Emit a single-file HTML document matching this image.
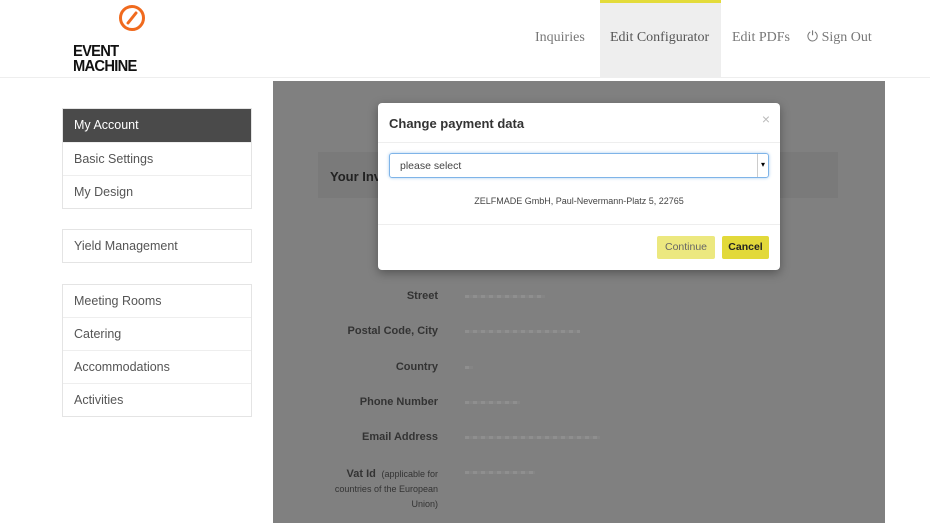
<!DOCTYPE html>
<html><head><style>
body{margin:0;width:930px;height:523px;background:#fff;font-family:"Liberation Sans",sans-serif;position:relative;overflow:hidden}
.a{position:absolute}
.nav{font-family:"Liberation Serif",serif;font-size:14px;color:#777;top:30px}
.side{left:62px;width:188px;border:1px solid #e4e4e4;background:#fff}
.side div{height:32px;line-height:32px;padding-left:11px;font-size:12.5px;color:#555;border-top:1px solid #eee}
.side div:first-child{border-top:none}
.lbl{font-size:11px;font-weight:bold;color:#333;text-align:right;width:200px;left:238px}
.val{left:465px;height:3px;background:repeating-linear-gradient(90deg,#999 0 4px,#888 4px 8px);opacity:.6}
</style></head><body>
<div class="a" style="left:0;top:77px;width:930px;height:1px;background:#eee"></div>
<svg class="a" style="left:116px;top:3px" width="32" height="30" viewBox="0 0 32 30"><circle cx="16" cy="15" r="11.5" fill="none" stroke="#f06a1e" stroke-width="3"/><line x1="12" y1="20" x2="20" y2="10" stroke="#f06a1e" stroke-width="3" stroke-linecap="round"/></svg>
<div class="a" style="left:73px;top:44px;font-weight:bold;font-size:16px;line-height:15px;color:#111;letter-spacing:-.8px;transform:scaleX(.92);transform-origin:left">EVENT<br>MACHINE</div>
<div class="a" style="left:600px;top:0;width:121px;height:78px;background:#eee"></div>
<div class="a" style="left:600px;top:0;width:121px;height:3px;background:#e3db3a"></div>
<div class="a nav" style="left:535px">Inquiries</div>
<div class="a nav" style="left:610px;color:#555">Edit Configurator</div>
<div class="a nav" style="left:732px">Edit PDFs</div>
<div class="a nav" style="left:807px">⏻ Sign Out</div>

<div class="a side" style="top:108px"><div style="background:#4a4a4a;color:#fff;height:33px;line-height:33px">My Account</div><div>Basic Settings</div><div>My Design</div></div>
<div class="a side" style="top:229px"><div>Yield Management</div></div>
<div class="a side" style="top:284px"><div>Meeting Rooms</div><div>Catering</div><div>Accommodations</div><div>Activities</div></div>

<div class="a" style="left:273px;top:81px;width:612px;height:442px;background:#808080"></div>
<div class="a" style="left:318px;top:152px;width:520px;height:46px;background:#7a7a7a"></div>
<div class="a" style="left:330px;top:169px;font-size:13px;font-weight:bold;color:#222">Your Inv</div>
<div class="a lbl" style="top:290px">Street</div>
<div class="a lbl" style="top:325px">Postal Code, City</div>
<div class="a lbl" style="top:361px">Country</div>
<div class="a lbl" style="top:396px">Phone Number</div>
<div class="a lbl" style="top:431px">Email Address</div>
<div class="a lbl" style="top:467px;line-height:15px">Vat Id <span style="font-weight:normal;font-size:9px">&nbsp;(applicable for<br>countries of the European<br>Union)</span></div>
<div class="a val" style="top:295px;width:80px"></div>
<div class="a val" style="top:330px;width:115px"></div>
<div class="a val" style="top:366px;width:8px"></div>
<div class="a val" style="top:401px;width:55px"></div>
<div class="a val" style="top:436px;width:135px"></div>
<div class="a val" style="top:471px;width:70px"></div>

<div class="a" style="left:378px;top:103px;width:402px;height:167px;background:#fff;border-radius:4px;box-shadow:0 3px 10px rgba(0,0,0,.35)">
<div class="a" style="left:11px;top:13px;font-size:13px;font-weight:bold;color:#333">Change payment data</div>
<div class="a" style="right:10px;top:8px;font-size:14px;color:#bbb">×</div>
<div class="a" style="left:0;top:39px;width:402px;height:1px;background:#eee"></div>
<div class="a" style="left:11px;top:50px;width:378px;height:23px;border:1px solid #7fb4e8;border-radius:3px;box-shadow:0 0 3px #a8ccf0"></div>
<div class="a" style="left:22px;top:57px;font-size:10.5px;color:#444">please select</div>
<div class="a" style="left:379px;top:51px;width:10px;height:23px;border-left:1px solid #ccc;font-size:8px;line-height:21px;text-align:center">▾</div>
<div class="a" style="left:0;top:93px;width:402px;text-align:center;font-size:9px;color:#444">ZELFMADE GmbH, Paul-Nevermann-Platz 5, 22765</div>
<div class="a" style="left:0;top:121px;width:402px;height:1px;background:#eee"></div>
<div class="a" style="left:279px;top:133px;width:58px;height:23px;background:#ece87f;border-radius:2px;font-size:10.5px;color:#666;text-align:center;line-height:23px">Continue</div>
<div class="a" style="left:344px;top:133px;width:47px;height:23px;background:#e2d93a;border-radius:2px;font-size:10.5px;color:#222;text-align:center;line-height:23px;font-weight:bold">Cancel</div>
</div>
</body></html>
